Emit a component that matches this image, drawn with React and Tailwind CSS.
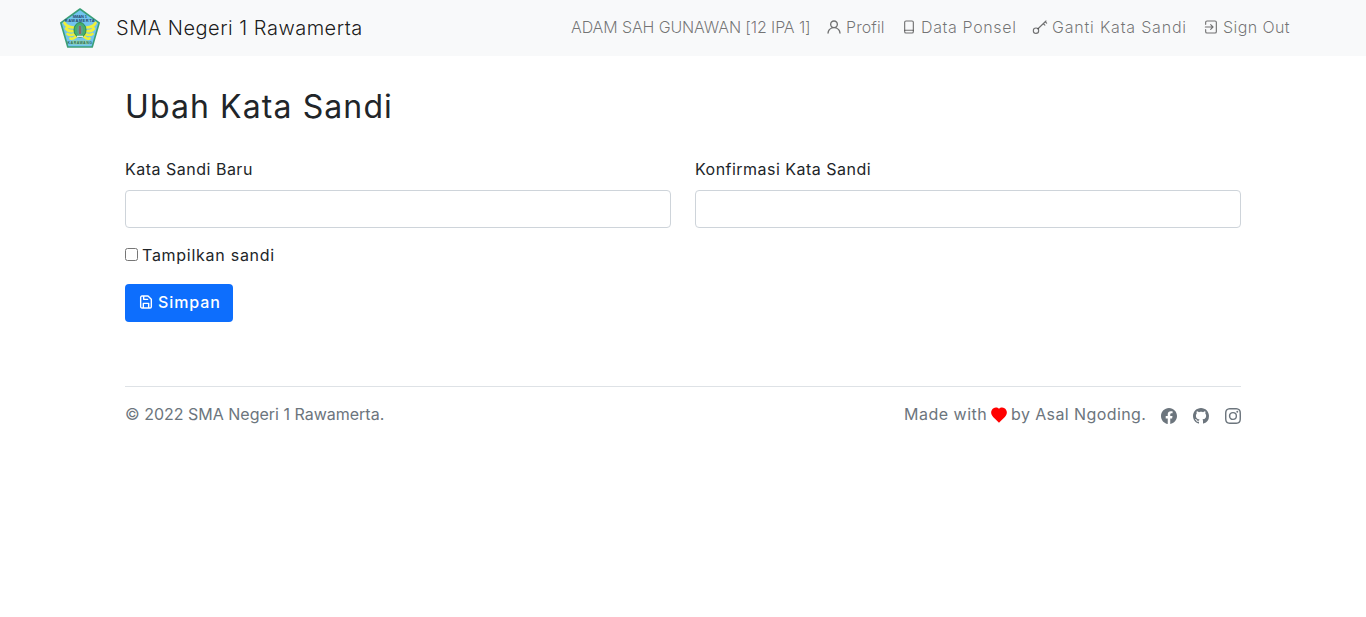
import { BsFacebook, BsGithub, BsInstagram } from 'react-icons/bs';

function Icon({ children }) {
  return (
    <svg viewBox="0 0 24 24" fill="none" stroke="currentColor" strokeWidth="1.7" strokeLinecap="round" strokeLinejoin="round" className="h-4 w-4 shrink-0">
      {children}
    </svg>
  );
}

function Logo() {
  return (
    <svg viewBox="0 0 40 40" className="h-10 w-10 shrink-0">
      <path d="M20 1 39.200 14.800 32.200 39H7.800L.8 14.800Z" fill="#72c4ee" stroke="#3a9f78" strokeWidth="1.600" strokeLinejoin="round" />
      <g fill="none" stroke="#eef03a" strokeWidth="2.700" strokeLinecap="round">
        <path d="M4.500 15Q7 19.500 13.500 19.500M6 20.500Q9 24 14 23M7.500 26Q10 28 15 26M10.500 30.500Q13 31.500 16 28.500" />
        <path d="M35.500 15Q33 19.500 26.500 19.500M34 20.500Q31 24 26 23M32.500 26Q30 28 25 26M29.500 30.500Q27 31.500 24 28.500" />
      </g>
      <ellipse cx="20" cy="22" rx="6" ry="7.500" fill="#45b06c" stroke="#2d8756" strokeWidth="1" />
      <ellipse cx="20" cy="22" rx="3" ry="5" fill="#5c9f94" />
      <path d="M20 18v8" stroke="#a84c4e" strokeWidth="1.300" />
      <path d="M17 28.500h6" stroke="#e8e8f0" strokeWidth="1.500" />
      <path d="M11 34.500h18" stroke="#8fd6b0" strokeWidth="4" />
      <text x="20" y="9.500" textAnchor="middle" fontSize="4" fontWeight="700" fill="#26496b" fontFamily="Liberation Sans, sans-serif" textLength="15">SMAN 1</text>
      <text x="20" y="13.800" textAnchor="middle" fontSize="4" fontWeight="700" fill="#26496b" fontFamily="Liberation Sans, sans-serif">RAWAMERTA</text>
      <text x="20" y="36" textAnchor="middle" fontSize="3.500" fontWeight="700" fill="#2f6a55" fontFamily="Liberation Sans, sans-serif">KARAWANG</text>
    </svg>
  );
}

export default function App() {
  return (
    <div className="min-h-[617px] bg-white font-['Inter',sans-serif] text-base text-[#212529]">
      <nav className="flex h-14 items-center justify-between bg-[#f8f9fa] pl-[60px] pr-[75px] font-light">
        <a className="flex items-center gap-4 text-xl tracking-[0.5px] whitespace-nowrap text-black/90">
          <Logo />
          <span>SMA Negeri 1 Rawamerta</span>
        </a>
        <ul className="flex items-center pb-0.5 whitespace-nowrap text-black/55">
          <li className="w-[255px] tracking-[-0.12px]">ADAM SAH GUNAWAN [12 IPA 1]</li>
          <li className="flex w-[75px] items-center gap-1">
            <svg viewBox="0 0 24 24" fill="currentColor" className="h-4 w-4 shrink-0">
              <path d="M15.710 12.710a6 6 0 1 0-7.420 0 10 10 0 0 0-6.220 8.180 1 1 0 0 0 2 .22 8 8 0 0 1 15.900 0 1 1 0 0 0 1 .89h.11a1 1 0 0 0 .88-1.100 10 10 0 0 0-6.250-8.190ZM12 12a4 4 0 1 1 4-4 4 4 0 0 1-4 4Z" />
            </svg>
            <span className="tracking-[0.1px]">Profil</span>
          </li>
          <li className="flex w-[131px] items-center gap-1">
            <Icon><rect x="5.500" y="3" width="13" height="18" rx="2" /><path d="M6 16.800h12" /></Icon>
            <span className="tracking-[0.63px]">Data Ponsel</span>
          </li>
          <li className="flex w-[171px] items-center gap-1">
            <Icon><circle cx="6" cy="17.500" r="4" /><path d="M9 14.600 21 3M17 7l2.300 2.300M20 4.200l2 2" /></Icon>
            <span className="tracking-[0.8px]">Ganti Kata Sandi</span>
          </li>
          <li className="flex w-[88px] items-center gap-1">
            <Icon><path d="M4 8V5a2 2 0 0 1 2-2h12a2 2 0 0 1 2 2v14a2 2 0 0 1-2 2H6a2 2 0 0 1-2-2v-3M3.500 12H15M11.500 8.500 15 12l-3.500 3.500" /></Icon>
            <span className="tracking-[0.4px]">Sign Out</span>
          </li>
        </ul>
      </nav>
      <main className="mx-auto w-[1116px] pt-8">
        <h1 className="text-[32px] leading-[38px] font-[380] tracking-[1.1px]">Ubah Kata Sandi</h1>
        <form className="mt-[31px]">
          <div className="grid grid-cols-2 gap-6">
            <div>
              <label className="mb-[9px] block leading-6 font-[370] tracking-[0.5px]">Kata Sandi Baru</label>
              <input type="password" className="block h-[38px] w-full rounded border border-[#ced4da] px-3 outline-none" />
            </div>
            <div>
              <label className="mb-[9px] block leading-6 font-[370] tracking-[0.48px]">Konfirmasi Kata Sandi</label>
              <input type="password" className="block h-[38px] w-full rounded border border-[#ced4da] px-3 outline-none" />
            </div>
          </div>
          <label className="mt-[15px] flex h-6 items-center gap-1 leading-6">
            <input type="checkbox" className="mb-0.5 h-[13px] w-[13px]" />
            <span className="font-[370] tracking-[0.73px]">Tampilkan sandi</span>
          </label>
          <button type="button" className="mt-[17px] flex h-[38px] w-[108px] items-center gap-1 rounded bg-[#0d6efd] pb-0.5 pl-[13px] font-medium whitespace-nowrap text-white">
            <Icon><path strokeWidth="2.100" d="M4 5a2 2 0 0 1 2-2h9l5 5v11a2 2 0 0 1-2 2H6a2 2 0 0 1-2-2ZM8.500 3v5h6M8 21v-7h8v7" /></Icon>
            <span className="tracking-[0.9px]">Simpan</span>
          </button>
        </form>
        <footer className="mt-16 flex justify-between border-t border-[#dee2e6] pt-[15px] leading-6 font-[370] whitespace-nowrap text-[#6c757d]">
          <p>© 2022 SMA Negeri 1 Rawamerta.</p>
          <div className="flex items-center">
            <span className="w-[87px] tracking-[0.5px]">Made with</span>
            <svg viewBox="0 0 16 16" className="mt-0.5 h-4 w-4 fill-[#ff0000]">
              <path d="M8 1.800C9.300.3 11.800.1 13.500 1.200c2.300 1.500 3 4.500 1.700 6.900C13.900 10.600 10.500 13.300 8 15.800 5.500 13.300 2.100 10.600.8 8.100-.5 5.700.2 2.700 2.500 1.200 4.200.1 6.700.3 8 1.800Z" />
            </svg>
            <span className="ml-1 w-[150px] tracking-[0.4px]">by Asal Ngoding.</span>
            <div className="flex gap-4 pt-[3px]">
              <BsFacebook className="h-4 w-4" />
              <BsGithub className="h-4 w-4" />
              <BsInstagram className="h-4 w-4" />
            </div>
          </div>
        </footer>
      </main>
    </div>
  );
}
